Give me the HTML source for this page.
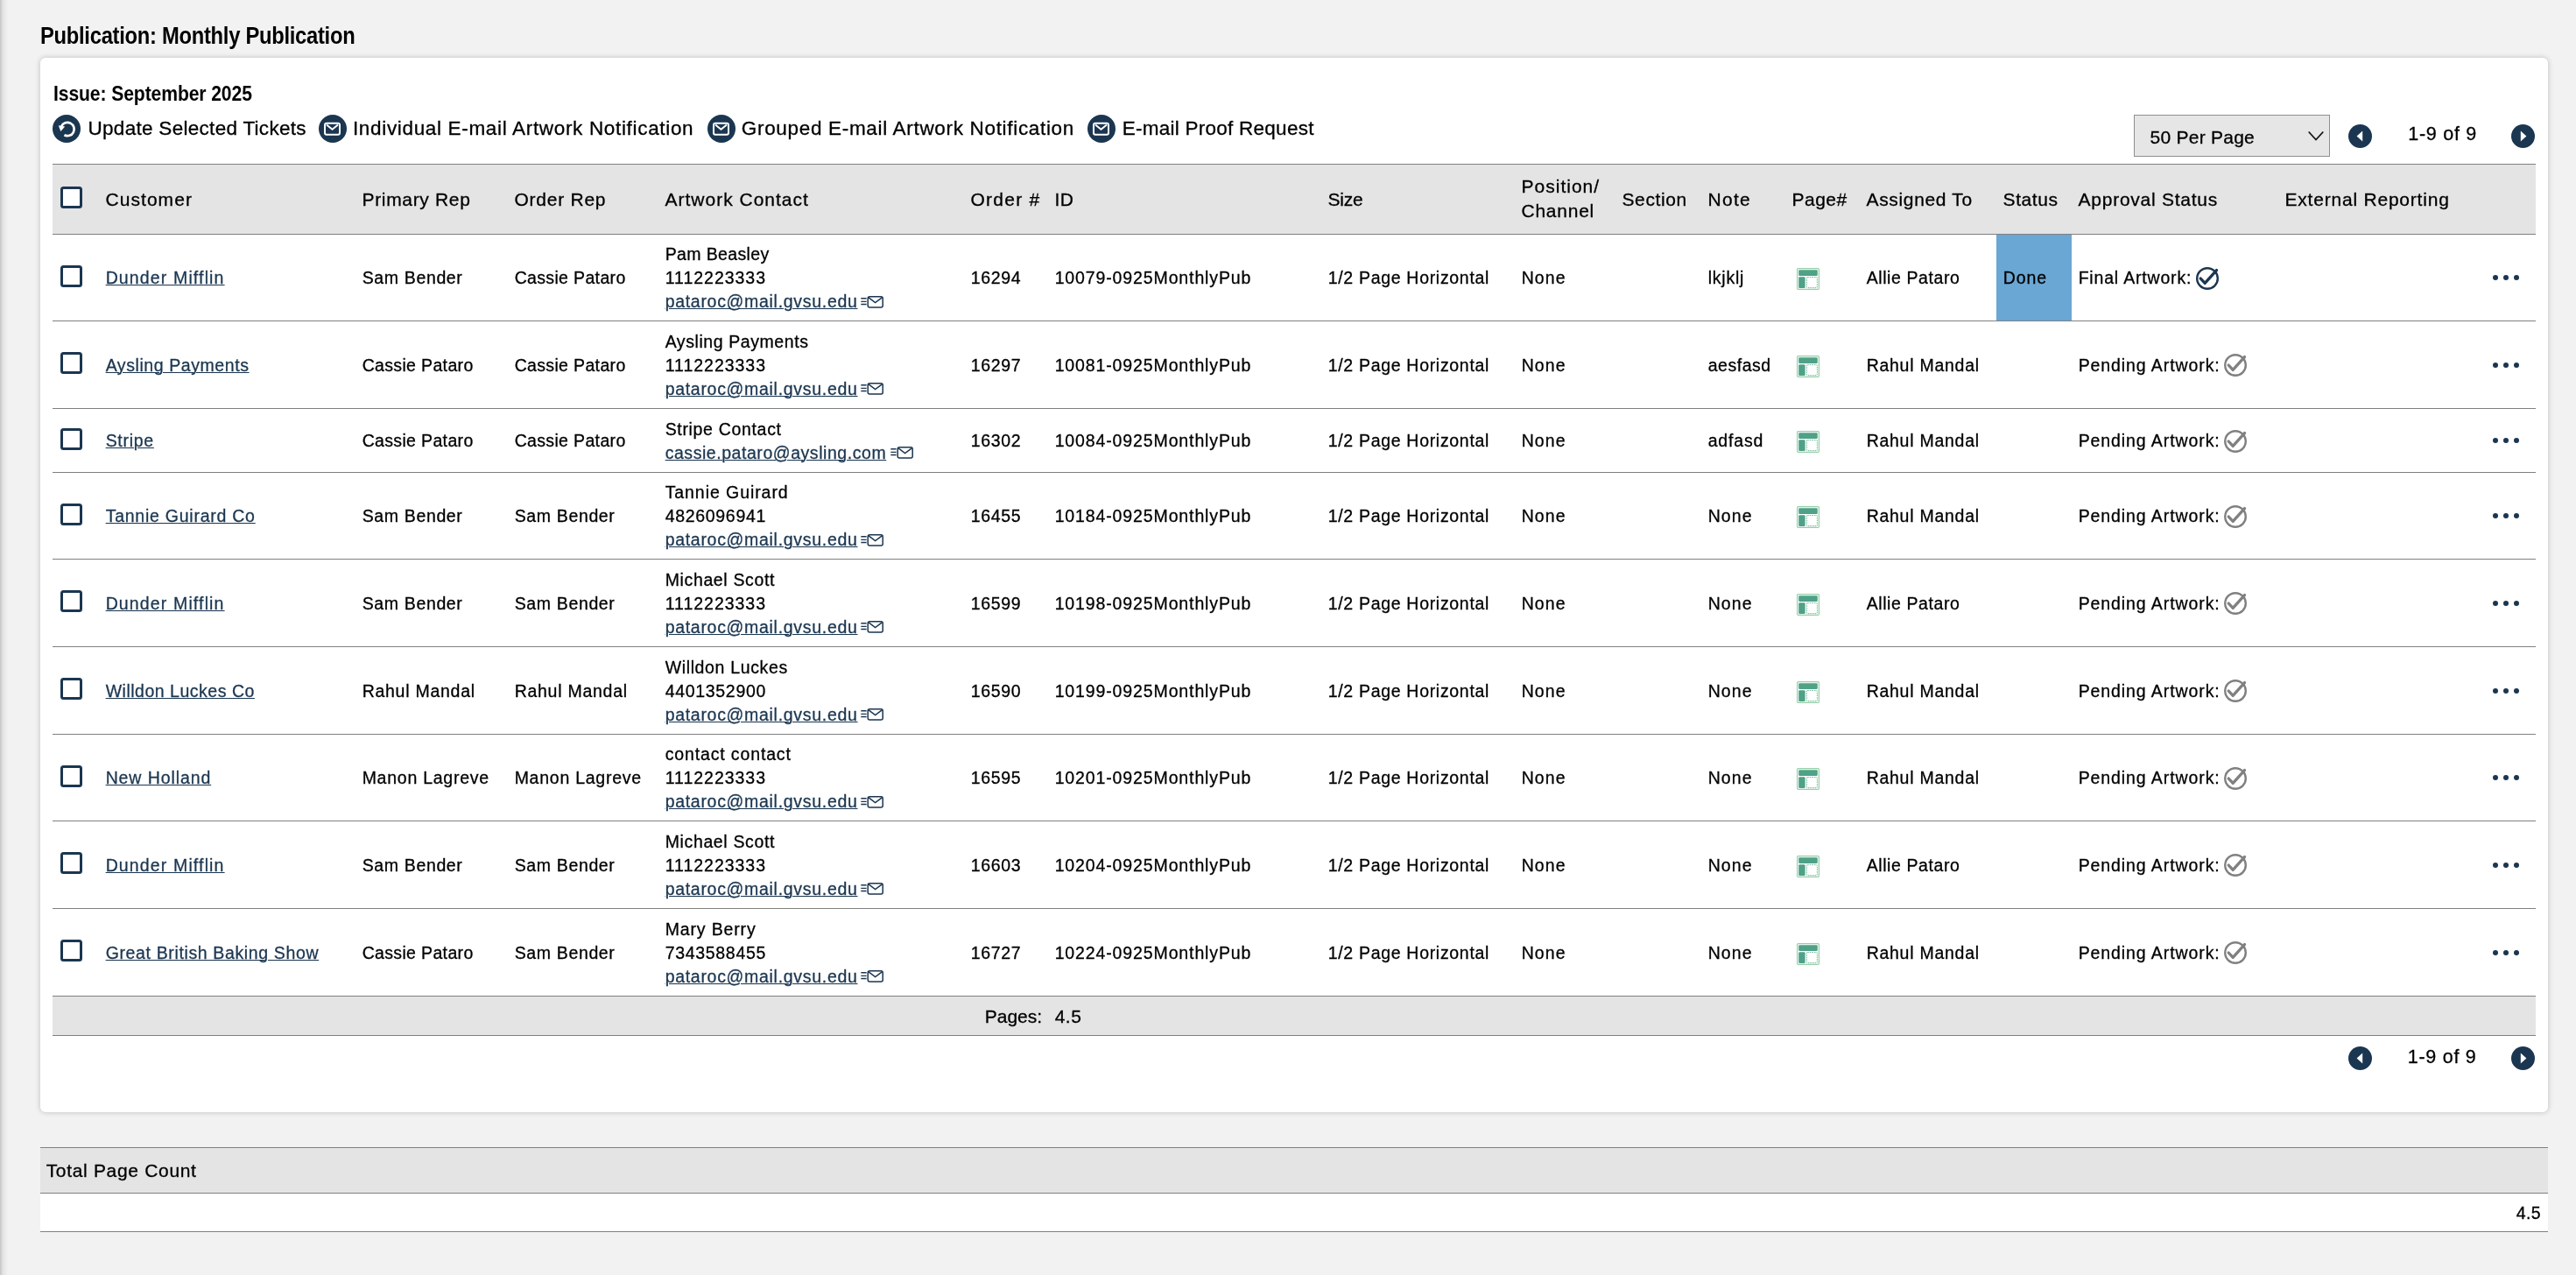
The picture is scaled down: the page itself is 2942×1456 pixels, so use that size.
<!DOCTYPE html>
<html><head><meta charset="utf-8"><title>Publication</title>
<style>
html,body{margin:0;padding:0}
body{width:2942px;height:1456px;overflow:hidden;background:#f2f2f2;position:relative;font-family:"Liberation Sans",sans-serif}
.a{position:absolute;display:block}
.t{position:absolute;white-space:pre;font-family:"Liberation Sans",sans-serif;-webkit-text-stroke:0.3px currentColor}
.cb{width:25px;height:25px;box-sizing:border-box;border:3px solid #1b3650;border-radius:3.5px;background:#fff}
</style></head><body>
<div class="a" style="left:0;top:0;width:10px;height:1456px;background:linear-gradient(to right,#c4c4c4,#e2e2e2 3px,#f2f2f2 9px)"></div>
<div class="a" style="left:46px;top:66px;width:2864px;height:1204px;background:#fff;border-radius:6px;box-shadow:0 0 6px rgba(0,0,0,0.22)"></div>
<div class="a" style="left:60px;top:188px;width:2836px;height:79px;background:#e4e4e4"></div>
<div class="a" style="left:60px;top:1138px;width:2836px;height:44px;background:#e4e4e4"></div>
<div class="a" style="left:2437px;top:131px;width:224px;height:48px;box-sizing:border-box;background:#e6e6e6;border:1px solid #8f8f8f"></div>
<svg class="a" style="left:2630px;top:145px" width="30" height="20" viewBox="0 0 30 20"><path d="M6.7 5.5 L15 14.6 L23.3 5.5" fill="none" stroke="#111" stroke-width="1.7"/></svg>
<div class="a" style="left:46px;top:1310px;width:2864px;height:1px;background:#808080"></div>
<div class="a" style="left:46px;top:1311px;width:2864px;height:51px;background:#e4e4e4"></div>
<div class="a" style="left:46px;top:1362px;width:2864px;height:1px;background:#808080"></div>
<div class="a" style="left:46px;top:1363px;width:2864px;height:43px;background:#fff"></div>
<div class="a" style="left:46px;top:1406px;width:2864px;height:1px;background:#808080"></div>
<div class="a" style="left:60px;top:187px;width:2836px;height:1px;background:#808080"></div><div class="a" style="left:60px;top:267px;width:2836px;height:1px;background:#808080"></div><div class="a" style="left:60px;top:366px;width:2836px;height:1px;background:#808080"></div><div class="a" style="left:60px;top:466px;width:2836px;height:1px;background:#808080"></div><div class="a" style="left:60px;top:539px;width:2836px;height:1px;background:#808080"></div><div class="a" style="left:60px;top:638px;width:2836px;height:1px;background:#808080"></div><div class="a" style="left:60px;top:738px;width:2836px;height:1px;background:#808080"></div><div class="a" style="left:60px;top:838px;width:2836px;height:1px;background:#808080"></div><div class="a" style="left:60px;top:937px;width:2836px;height:1px;background:#808080"></div><div class="a" style="left:60px;top:1037px;width:2836px;height:1px;background:#808080"></div><div class="a" style="left:60px;top:1137px;width:2836px;height:1px;background:#808080"></div><div class="a" style="left:60px;top:1182px;width:2836px;height:1px;background:#808080"></div>
<svg class="a" style="left:60.00px;top:131.00px" width="32" height="32" viewBox="0 0 32 32"><circle cx="16.0" cy="16.0" r="16.0" fill="#1b3650"/><path d="M10.1 13.3 A7.65 7.65 0 1 1 13.4 23.25" fill="none" stroke="#fff" stroke-width="2.7"/><path d="M6.8 12.2 L14.2 13.4 L9.3 19 Z" fill="#fff"/></svg><svg class="a" style="left:364.00px;top:131.00px" width="32" height="32" viewBox="0 0 32 32"><circle cx="16.0" cy="16.0" r="16.0" fill="#1b3650"/><rect x="7" y="9.8" width="17" height="13" rx="2" fill="none" stroke="#fff" stroke-width="2"/><path d="M9 11.5 L15.5 16.8 L22 11.5" fill="none" stroke="#fff" stroke-width="2"/></svg><svg class="a" style="left:808.00px;top:131.00px" width="32" height="32" viewBox="0 0 32 32"><circle cx="16.0" cy="16.0" r="16.0" fill="#1b3650"/><rect x="7" y="9.8" width="17" height="13" rx="2" fill="none" stroke="#fff" stroke-width="2"/><path d="M9 11.5 L15.5 16.8 L22 11.5" fill="none" stroke="#fff" stroke-width="2"/></svg><svg class="a" style="left:1242.00px;top:131.00px" width="32" height="32" viewBox="0 0 32 32"><circle cx="16.0" cy="16.0" r="16.0" fill="#1b3650"/><rect x="7" y="9.8" width="17" height="13" rx="2" fill="none" stroke="#fff" stroke-width="2"/><path d="M9 11.5 L15.5 16.8 L22 11.5" fill="none" stroke="#fff" stroke-width="2"/></svg><svg class="a" style="left:2681.90px;top:141.80px" width="27" height="27" viewBox="0 0 27 27"><circle cx="13.5" cy="13.5" r="13.5" fill="#1b3650"/><path d="M9.6 13.5 L16.2 7.6 L16.2 19.4 Z" fill="#fff"/></svg><svg class="a" style="left:2868.20px;top:141.80px" width="27" height="27" viewBox="0 0 27 27"><circle cx="13.5" cy="13.5" r="13.5" fill="#1b3650"/><path d="M17.4 13.5 L10.8 7.6 L10.8 19.4 Z" fill="#fff"/></svg><svg class="a" style="left:2681.90px;top:1195.00px" width="27" height="27" viewBox="0 0 27 27"><circle cx="13.5" cy="13.5" r="13.5" fill="#1b3650"/><path d="M9.6 13.5 L16.2 7.6 L16.2 19.4 Z" fill="#fff"/></svg><svg class="a" style="left:2868.20px;top:1195.00px" width="27" height="27" viewBox="0 0 27 27"><circle cx="13.5" cy="13.5" r="13.5" fill="#1b3650"/><path d="M17.4 13.5 L10.8 7.6 L10.8 19.4 Z" fill="#fff"/></svg><svg class="a" style="left:983.20px;top:337.80px" width="27" height="15" viewBox="0 0 27 15"><path d="M0.3 2.8 H6.6 M0.3 6.4 H6.6 M0.3 9.5 H6.6" stroke="#1b3650" stroke-width="1.4"/><rect x="8.2" y="0.8" width="17" height="12.2" rx="2" fill="none" stroke="#1b3650" stroke-width="1.5"/><path d="M8.8 1.6 L16.6 7.6 L24.6 1.6" fill="none" stroke="#1b3650" stroke-width="1.5"/></svg><svg class="a" style="left:2052px;top:306.00px" width="26" height="25" viewBox="0 0 26 25"><rect x="0.6" y="0.6" width="24.8" height="23.8" rx="1.2" fill="#fff" stroke="#94cfa6" stroke-width="1.2"/><rect x="2.2" y="2.2" width="21.6" height="6.8" rx="1.2" fill="#4fa187"/><rect x="2.2" y="10.2" width="7.4" height="12.8" rx="1.2" fill="#4fa187"/><rect x="11.4" y="10.6" width="12" height="12" rx="0.8" fill="#fff" stroke="#4fa187" stroke-width="0.8" stroke-dasharray="1.6 1"/></svg><div class="a" style="left:2280px;top:268px;width:86px;height:98px;background:#6aa7d5"></div><svg class="a" style="left:2507.00px;top:304.00px" width="28" height="28" viewBox="0 0 28 28"><circle cx="14" cy="14" r="11.8" fill="none" stroke="#1b3650" stroke-width="2.4"/><path d="M6.2 14 L11.2 19.4 L24.5 4.6" fill="none" stroke="#1b3650" stroke-width="3.3" stroke-linejoin="round" stroke-linecap="round"/></svg><div class="a" style="left:2847px;top:314.00px;width:6px;height:6px;border-radius:3px;background:#1b3650"></div><div class="a" style="left:2859px;top:314.00px;width:6px;height:6px;border-radius:3px;background:#1b3650"></div><div class="a" style="left:2871px;top:314.00px;width:6px;height:6px;border-radius:3px;background:#1b3650"></div><div class="a cb" style="left:69px;top:302.50px"></div><svg class="a" style="left:983.20px;top:437.30px" width="27" height="15" viewBox="0 0 27 15"><path d="M0.3 2.8 H6.6 M0.3 6.4 H6.6 M0.3 9.5 H6.6" stroke="#1b3650" stroke-width="1.4"/><rect x="8.2" y="0.8" width="17" height="12.2" rx="2" fill="none" stroke="#1b3650" stroke-width="1.5"/><path d="M8.8 1.6 L16.6 7.6 L24.6 1.6" fill="none" stroke="#1b3650" stroke-width="1.5"/></svg><svg class="a" style="left:2052px;top:405.50px" width="26" height="25" viewBox="0 0 26 25"><rect x="0.6" y="0.6" width="24.8" height="23.8" rx="1.2" fill="#fff" stroke="#94cfa6" stroke-width="1.2"/><rect x="2.2" y="2.2" width="21.6" height="6.8" rx="1.2" fill="#4fa187"/><rect x="2.2" y="10.2" width="7.4" height="12.8" rx="1.2" fill="#4fa187"/><rect x="11.4" y="10.6" width="12" height="12" rx="0.8" fill="#fff" stroke="#4fa187" stroke-width="0.8" stroke-dasharray="1.6 1"/></svg><svg class="a" style="left:2538.60px;top:403.00px" width="28" height="28" viewBox="0 0 28 28"><circle cx="14" cy="14" r="11.8" fill="none" stroke="#808080" stroke-width="2.4"/><path d="M6.2 14 L11.2 19.4 L24.5 4.6" fill="none" stroke="#808080" stroke-width="3.3" stroke-linejoin="round" stroke-linecap="round"/></svg><div class="a" style="left:2847px;top:413.50px;width:6px;height:6px;border-radius:3px;background:#1b3650"></div><div class="a" style="left:2859px;top:413.50px;width:6px;height:6px;border-radius:3px;background:#1b3650"></div><div class="a" style="left:2871px;top:413.50px;width:6px;height:6px;border-radius:3px;background:#1b3650"></div><div class="a cb" style="left:69px;top:402.00px"></div><svg class="a" style="left:1016.50px;top:510.30px" width="27" height="15" viewBox="0 0 27 15"><path d="M0.3 2.8 H6.6 M0.3 6.4 H6.6 M0.3 9.5 H6.6" stroke="#1b3650" stroke-width="1.4"/><rect x="8.2" y="0.8" width="17" height="12.2" rx="2" fill="none" stroke="#1b3650" stroke-width="1.5"/><path d="M8.8 1.6 L16.6 7.6 L24.6 1.6" fill="none" stroke="#1b3650" stroke-width="1.5"/></svg><svg class="a" style="left:2052px;top:492.00px" width="26" height="25" viewBox="0 0 26 25"><rect x="0.6" y="0.6" width="24.8" height="23.8" rx="1.2" fill="#fff" stroke="#94cfa6" stroke-width="1.2"/><rect x="2.2" y="2.2" width="21.6" height="6.8" rx="1.2" fill="#4fa187"/><rect x="2.2" y="10.2" width="7.4" height="12.8" rx="1.2" fill="#4fa187"/><rect x="11.4" y="10.6" width="12" height="12" rx="0.8" fill="#fff" stroke="#4fa187" stroke-width="0.8" stroke-dasharray="1.6 1"/></svg><svg class="a" style="left:2538.60px;top:489.50px" width="28" height="28" viewBox="0 0 28 28"><circle cx="14" cy="14" r="11.8" fill="none" stroke="#808080" stroke-width="2.4"/><path d="M6.2 14 L11.2 19.4 L24.5 4.6" fill="none" stroke="#808080" stroke-width="3.3" stroke-linejoin="round" stroke-linecap="round"/></svg><div class="a" style="left:2847px;top:500.00px;width:6px;height:6px;border-radius:3px;background:#1b3650"></div><div class="a" style="left:2859px;top:500.00px;width:6px;height:6px;border-radius:3px;background:#1b3650"></div><div class="a" style="left:2871px;top:500.00px;width:6px;height:6px;border-radius:3px;background:#1b3650"></div><div class="a cb" style="left:69px;top:488.50px"></div><svg class="a" style="left:983.20px;top:609.80px" width="27" height="15" viewBox="0 0 27 15"><path d="M0.3 2.8 H6.6 M0.3 6.4 H6.6 M0.3 9.5 H6.6" stroke="#1b3650" stroke-width="1.4"/><rect x="8.2" y="0.8" width="17" height="12.2" rx="2" fill="none" stroke="#1b3650" stroke-width="1.5"/><path d="M8.8 1.6 L16.6 7.6 L24.6 1.6" fill="none" stroke="#1b3650" stroke-width="1.5"/></svg><svg class="a" style="left:2052px;top:578.00px" width="26" height="25" viewBox="0 0 26 25"><rect x="0.6" y="0.6" width="24.8" height="23.8" rx="1.2" fill="#fff" stroke="#94cfa6" stroke-width="1.2"/><rect x="2.2" y="2.2" width="21.6" height="6.8" rx="1.2" fill="#4fa187"/><rect x="2.2" y="10.2" width="7.4" height="12.8" rx="1.2" fill="#4fa187"/><rect x="11.4" y="10.6" width="12" height="12" rx="0.8" fill="#fff" stroke="#4fa187" stroke-width="0.8" stroke-dasharray="1.6 1"/></svg><svg class="a" style="left:2538.60px;top:575.50px" width="28" height="28" viewBox="0 0 28 28"><circle cx="14" cy="14" r="11.8" fill="none" stroke="#808080" stroke-width="2.4"/><path d="M6.2 14 L11.2 19.4 L24.5 4.6" fill="none" stroke="#808080" stroke-width="3.3" stroke-linejoin="round" stroke-linecap="round"/></svg><div class="a" style="left:2847px;top:586.00px;width:6px;height:6px;border-radius:3px;background:#1b3650"></div><div class="a" style="left:2859px;top:586.00px;width:6px;height:6px;border-radius:3px;background:#1b3650"></div><div class="a" style="left:2871px;top:586.00px;width:6px;height:6px;border-radius:3px;background:#1b3650"></div><div class="a cb" style="left:69px;top:574.50px"></div><svg class="a" style="left:983.20px;top:709.30px" width="27" height="15" viewBox="0 0 27 15"><path d="M0.3 2.8 H6.6 M0.3 6.4 H6.6 M0.3 9.5 H6.6" stroke="#1b3650" stroke-width="1.4"/><rect x="8.2" y="0.8" width="17" height="12.2" rx="2" fill="none" stroke="#1b3650" stroke-width="1.5"/><path d="M8.8 1.6 L16.6 7.6 L24.6 1.6" fill="none" stroke="#1b3650" stroke-width="1.5"/></svg><svg class="a" style="left:2052px;top:677.50px" width="26" height="25" viewBox="0 0 26 25"><rect x="0.6" y="0.6" width="24.8" height="23.8" rx="1.2" fill="#fff" stroke="#94cfa6" stroke-width="1.2"/><rect x="2.2" y="2.2" width="21.6" height="6.8" rx="1.2" fill="#4fa187"/><rect x="2.2" y="10.2" width="7.4" height="12.8" rx="1.2" fill="#4fa187"/><rect x="11.4" y="10.6" width="12" height="12" rx="0.8" fill="#fff" stroke="#4fa187" stroke-width="0.8" stroke-dasharray="1.6 1"/></svg><svg class="a" style="left:2538.60px;top:675.00px" width="28" height="28" viewBox="0 0 28 28"><circle cx="14" cy="14" r="11.8" fill="none" stroke="#808080" stroke-width="2.4"/><path d="M6.2 14 L11.2 19.4 L24.5 4.6" fill="none" stroke="#808080" stroke-width="3.3" stroke-linejoin="round" stroke-linecap="round"/></svg><div class="a" style="left:2847px;top:685.50px;width:6px;height:6px;border-radius:3px;background:#1b3650"></div><div class="a" style="left:2859px;top:685.50px;width:6px;height:6px;border-radius:3px;background:#1b3650"></div><div class="a" style="left:2871px;top:685.50px;width:6px;height:6px;border-radius:3px;background:#1b3650"></div><div class="a cb" style="left:69px;top:674.00px"></div><svg class="a" style="left:983.20px;top:809.30px" width="27" height="15" viewBox="0 0 27 15"><path d="M0.3 2.8 H6.6 M0.3 6.4 H6.6 M0.3 9.5 H6.6" stroke="#1b3650" stroke-width="1.4"/><rect x="8.2" y="0.8" width="17" height="12.2" rx="2" fill="none" stroke="#1b3650" stroke-width="1.5"/><path d="M8.8 1.6 L16.6 7.6 L24.6 1.6" fill="none" stroke="#1b3650" stroke-width="1.5"/></svg><svg class="a" style="left:2052px;top:777.50px" width="26" height="25" viewBox="0 0 26 25"><rect x="0.6" y="0.6" width="24.8" height="23.8" rx="1.2" fill="#fff" stroke="#94cfa6" stroke-width="1.2"/><rect x="2.2" y="2.2" width="21.6" height="6.8" rx="1.2" fill="#4fa187"/><rect x="2.2" y="10.2" width="7.4" height="12.8" rx="1.2" fill="#4fa187"/><rect x="11.4" y="10.6" width="12" height="12" rx="0.8" fill="#fff" stroke="#4fa187" stroke-width="0.8" stroke-dasharray="1.6 1"/></svg><svg class="a" style="left:2538.60px;top:775.00px" width="28" height="28" viewBox="0 0 28 28"><circle cx="14" cy="14" r="11.8" fill="none" stroke="#808080" stroke-width="2.4"/><path d="M6.2 14 L11.2 19.4 L24.5 4.6" fill="none" stroke="#808080" stroke-width="3.3" stroke-linejoin="round" stroke-linecap="round"/></svg><div class="a" style="left:2847px;top:785.50px;width:6px;height:6px;border-radius:3px;background:#1b3650"></div><div class="a" style="left:2859px;top:785.50px;width:6px;height:6px;border-radius:3px;background:#1b3650"></div><div class="a" style="left:2871px;top:785.50px;width:6px;height:6px;border-radius:3px;background:#1b3650"></div><div class="a cb" style="left:69px;top:774.00px"></div><svg class="a" style="left:983.20px;top:908.80px" width="27" height="15" viewBox="0 0 27 15"><path d="M0.3 2.8 H6.6 M0.3 6.4 H6.6 M0.3 9.5 H6.6" stroke="#1b3650" stroke-width="1.4"/><rect x="8.2" y="0.8" width="17" height="12.2" rx="2" fill="none" stroke="#1b3650" stroke-width="1.5"/><path d="M8.8 1.6 L16.6 7.6 L24.6 1.6" fill="none" stroke="#1b3650" stroke-width="1.5"/></svg><svg class="a" style="left:2052px;top:877.00px" width="26" height="25" viewBox="0 0 26 25"><rect x="0.6" y="0.6" width="24.8" height="23.8" rx="1.2" fill="#fff" stroke="#94cfa6" stroke-width="1.2"/><rect x="2.2" y="2.2" width="21.6" height="6.8" rx="1.2" fill="#4fa187"/><rect x="2.2" y="10.2" width="7.4" height="12.8" rx="1.2" fill="#4fa187"/><rect x="11.4" y="10.6" width="12" height="12" rx="0.8" fill="#fff" stroke="#4fa187" stroke-width="0.8" stroke-dasharray="1.6 1"/></svg><svg class="a" style="left:2538.60px;top:874.50px" width="28" height="28" viewBox="0 0 28 28"><circle cx="14" cy="14" r="11.8" fill="none" stroke="#808080" stroke-width="2.4"/><path d="M6.2 14 L11.2 19.4 L24.5 4.6" fill="none" stroke="#808080" stroke-width="3.3" stroke-linejoin="round" stroke-linecap="round"/></svg><div class="a" style="left:2847px;top:885.00px;width:6px;height:6px;border-radius:3px;background:#1b3650"></div><div class="a" style="left:2859px;top:885.00px;width:6px;height:6px;border-radius:3px;background:#1b3650"></div><div class="a" style="left:2871px;top:885.00px;width:6px;height:6px;border-radius:3px;background:#1b3650"></div><div class="a cb" style="left:69px;top:873.50px"></div><svg class="a" style="left:983.20px;top:1008.30px" width="27" height="15" viewBox="0 0 27 15"><path d="M0.3 2.8 H6.6 M0.3 6.4 H6.6 M0.3 9.5 H6.6" stroke="#1b3650" stroke-width="1.4"/><rect x="8.2" y="0.8" width="17" height="12.2" rx="2" fill="none" stroke="#1b3650" stroke-width="1.5"/><path d="M8.8 1.6 L16.6 7.6 L24.6 1.6" fill="none" stroke="#1b3650" stroke-width="1.5"/></svg><svg class="a" style="left:2052px;top:976.50px" width="26" height="25" viewBox="0 0 26 25"><rect x="0.6" y="0.6" width="24.8" height="23.8" rx="1.2" fill="#fff" stroke="#94cfa6" stroke-width="1.2"/><rect x="2.2" y="2.2" width="21.6" height="6.8" rx="1.2" fill="#4fa187"/><rect x="2.2" y="10.2" width="7.4" height="12.8" rx="1.2" fill="#4fa187"/><rect x="11.4" y="10.6" width="12" height="12" rx="0.8" fill="#fff" stroke="#4fa187" stroke-width="0.8" stroke-dasharray="1.6 1"/></svg><svg class="a" style="left:2538.60px;top:974.00px" width="28" height="28" viewBox="0 0 28 28"><circle cx="14" cy="14" r="11.8" fill="none" stroke="#808080" stroke-width="2.4"/><path d="M6.2 14 L11.2 19.4 L24.5 4.6" fill="none" stroke="#808080" stroke-width="3.3" stroke-linejoin="round" stroke-linecap="round"/></svg><div class="a" style="left:2847px;top:984.50px;width:6px;height:6px;border-radius:3px;background:#1b3650"></div><div class="a" style="left:2859px;top:984.50px;width:6px;height:6px;border-radius:3px;background:#1b3650"></div><div class="a" style="left:2871px;top:984.50px;width:6px;height:6px;border-radius:3px;background:#1b3650"></div><div class="a cb" style="left:69px;top:973.00px"></div><svg class="a" style="left:983.20px;top:1108.30px" width="27" height="15" viewBox="0 0 27 15"><path d="M0.3 2.8 H6.6 M0.3 6.4 H6.6 M0.3 9.5 H6.6" stroke="#1b3650" stroke-width="1.4"/><rect x="8.2" y="0.8" width="17" height="12.2" rx="2" fill="none" stroke="#1b3650" stroke-width="1.5"/><path d="M8.8 1.6 L16.6 7.6 L24.6 1.6" fill="none" stroke="#1b3650" stroke-width="1.5"/></svg><svg class="a" style="left:2052px;top:1076.50px" width="26" height="25" viewBox="0 0 26 25"><rect x="0.6" y="0.6" width="24.8" height="23.8" rx="1.2" fill="#fff" stroke="#94cfa6" stroke-width="1.2"/><rect x="2.2" y="2.2" width="21.6" height="6.8" rx="1.2" fill="#4fa187"/><rect x="2.2" y="10.2" width="7.4" height="12.8" rx="1.2" fill="#4fa187"/><rect x="11.4" y="10.6" width="12" height="12" rx="0.8" fill="#fff" stroke="#4fa187" stroke-width="0.8" stroke-dasharray="1.6 1"/></svg><svg class="a" style="left:2538.60px;top:1074.00px" width="28" height="28" viewBox="0 0 28 28"><circle cx="14" cy="14" r="11.8" fill="none" stroke="#808080" stroke-width="2.4"/><path d="M6.2 14 L11.2 19.4 L24.5 4.6" fill="none" stroke="#808080" stroke-width="3.3" stroke-linejoin="round" stroke-linecap="round"/></svg><div class="a" style="left:2847px;top:1084.50px;width:6px;height:6px;border-radius:3px;background:#1b3650"></div><div class="a" style="left:2859px;top:1084.50px;width:6px;height:6px;border-radius:3px;background:#1b3650"></div><div class="a" style="left:2871px;top:1084.50px;width:6px;height:6px;border-radius:3px;background:#1b3650"></div><div class="a cb" style="left:69px;top:1073.00px"></div><div class="a cb" style="left:69px;top:213px"></div>
<div class="a" style="left:0;top:0;width:2942px;height:1456px;will-change:transform"><div class="t" style="left:45.81px;top:23.84px;font-size:27px;line-height:34px;letter-spacing:-0.315px;color:#000;font-weight:700;-webkit-text-stroke:0;transform:scaleX(0.88);transform-origin:0 0;">Publication: Monthly Publication</div><div class="t" style="left:60.92px;top:92.38px;font-size:24px;line-height:30px;letter-spacing:-0.115px;color:#000;font-weight:700;-webkit-text-stroke:0;transform:scaleX(0.88);transform-origin:0 0;">Issue: September 2025</div><div class="t" style="left:100.52px;top:133.00px;font-size:22.5px;line-height:28px;letter-spacing:0.291px;color:#000000;">Update Selected Tickets</div><div class="t" style="left:402.93px;top:133.00px;font-size:22.5px;line-height:28px;letter-spacing:0.670px;color:#000000;">Individual E-mail Artwork Notification</div><div class="t" style="left:846.82px;top:133.00px;font-size:22.5px;line-height:28px;letter-spacing:0.680px;color:#000000;">Grouped E-mail Artwork Notification</div><div class="t" style="left:1281.72px;top:133.00px;font-size:22.5px;line-height:28px;letter-spacing:0.256px;color:#000000;">E-mail Proof Request</div><div class="t" style="left:2455.53px;top:143.82px;font-size:21px;line-height:26px;letter-spacing:0.247px;color:#000000;">50 Per Page</div><div class="t" style="left:2750.19px;top:140.05px;font-size:21.5px;line-height:27px;letter-spacing:0.747px;color:#000000;">1-9 of 9</div><div class="t" style="left:2749.69px;top:1193.55px;font-size:21.5px;line-height:27px;letter-spacing:0.747px;color:#000000;">1-9 of 9</div><div class="t" style="left:120.53px;top:214.72px;font-size:21px;line-height:26px;letter-spacing:1.049px;color:#000000;">Customer</div><div class="t" style="left:413.53px;top:214.72px;font-size:21px;line-height:26px;letter-spacing:0.662px;color:#000000;">Primary Rep</div><div class="t" style="left:587.53px;top:214.72px;font-size:21px;line-height:26px;letter-spacing:0.744px;color:#000000;">Order Rep</div><div class="t" style="left:759.53px;top:214.72px;font-size:21px;line-height:26px;letter-spacing:0.995px;color:#000000;">Artwork Contact</div><div class="t" style="left:1108.53px;top:214.72px;font-size:21px;line-height:26px;letter-spacing:1.239px;color:#000000;">Order #</div><div class="t" style="left:1204.53px;top:214.72px;font-size:21px;line-height:26px;letter-spacing:0.424px;color:#000000;">ID</div><div class="t" style="left:1516.53px;top:214.72px;font-size:21px;line-height:26px;letter-spacing:-0.265px;color:#000000;">Size</div><div class="t" style="left:1852.53px;top:214.72px;font-size:21px;line-height:26px;letter-spacing:0.591px;color:#000000;">Section</div><div class="t" style="left:1950.53px;top:214.72px;font-size:21px;line-height:26px;letter-spacing:1.261px;color:#000000;">Note</div><div class="t" style="left:2046.53px;top:214.72px;font-size:21px;line-height:26px;letter-spacing:0.493px;color:#000000;">Page#</div><div class="t" style="left:2131.53px;top:214.72px;font-size:21px;line-height:26px;letter-spacing:0.658px;color:#000000;">Assigned To</div><div class="t" style="left:2287.53px;top:214.72px;font-size:21px;line-height:26px;letter-spacing:0.606px;color:#000000;">Status</div><div class="t" style="left:2373.53px;top:214.72px;font-size:21px;line-height:26px;letter-spacing:0.752px;color:#000000;">Approval Status</div><div class="t" style="left:2609.53px;top:214.72px;font-size:21px;line-height:26px;letter-spacing:0.786px;color:#000000;">External Reporting</div><div class="t" style="left:1737.53px;top:200.42px;font-size:21px;line-height:26px;letter-spacing:1.007px;color:#000000;">Position/</div><div class="t" style="left:1737.53px;top:227.92px;font-size:21px;line-height:26px;letter-spacing:0.747px;color:#000000;">Channel</div><div class="t" style="left:120.64px;top:305.24px;font-size:19.5px;line-height:24px;letter-spacing:1.143px;color:#1b3650;text-decoration:underline;text-decoration-thickness:1.3px;text-underline-offset:1px;">Dunder Mifflin</div><div class="t" style="left:413.63px;top:305.24px;font-size:19.5px;line-height:24px;letter-spacing:0.649px;color:#000000;">Sam Bender</div><div class="t" style="left:587.63px;top:305.24px;font-size:19.5px;line-height:24px;letter-spacing:0.347px;color:#000000;">Cassie Pataro</div><div class="t" style="left:759.63px;top:278.24px;font-size:19.5px;line-height:24px;letter-spacing:0.377px;color:#000000;">Pam Beasley</div><div class="t" style="left:759.63px;top:305.24px;font-size:19.5px;line-height:24px;letter-spacing:0.984px;color:#000000;">1112223333</div><div class="t" style="left:759.63px;top:332.24px;font-size:19.5px;line-height:24px;letter-spacing:0.703px;color:#1b3650;text-decoration:underline;text-decoration-thickness:1.3px;text-underline-offset:1px;">pataroc@mail.gvsu.edu</div><div class="t" style="left:1108.63px;top:305.24px;font-size:19.5px;line-height:24px;letter-spacing:0.693px;color:#000000;">16294</div><div class="t" style="left:1204.63px;top:305.24px;font-size:19.5px;line-height:24px;letter-spacing:0.880px;color:#000000;">10079-0925MonthlyPub</div><div class="t" style="left:1516.63px;top:305.24px;font-size:19.5px;line-height:24px;letter-spacing:0.694px;color:#000000;">1/2 Page Horizontal</div><div class="t" style="left:1737.63px;top:305.24px;font-size:19.5px;line-height:24px;letter-spacing:1.107px;color:#000000;">None</div><div class="t" style="left:1950.63px;top:305.24px;font-size:19.5px;line-height:24px;letter-spacing:0.792px;color:#000000;">lkjklj</div><div class="t" style="left:2131.64px;top:305.24px;font-size:19.5px;line-height:24px;letter-spacing:0.589px;color:#000000;">Allie Pataro</div><div class="t" style="left:2287.64px;top:305.24px;font-size:19.5px;line-height:24px;letter-spacing:0.970px;color:#000000;">Done</div><div class="t" style="left:2373.64px;top:305.24px;font-size:19.5px;line-height:24px;letter-spacing:0.819px;color:#000000;">Final Artwork:</div><div class="t" style="left:120.64px;top:404.74px;font-size:19.5px;line-height:24px;letter-spacing:0.581px;color:#1b3650;text-decoration:underline;text-decoration-thickness:1.3px;text-underline-offset:1px;">Aysling Payments</div><div class="t" style="left:413.63px;top:404.74px;font-size:19.5px;line-height:24px;letter-spacing:0.347px;color:#000000;">Cassie Pataro</div><div class="t" style="left:587.63px;top:404.74px;font-size:19.5px;line-height:24px;letter-spacing:0.347px;color:#000000;">Cassie Pataro</div><div class="t" style="left:759.63px;top:377.74px;font-size:19.5px;line-height:24px;letter-spacing:0.581px;color:#000000;">Aysling Payments</div><div class="t" style="left:759.63px;top:404.74px;font-size:19.5px;line-height:24px;letter-spacing:0.984px;color:#000000;">1112223333</div><div class="t" style="left:759.63px;top:431.74px;font-size:19.5px;line-height:24px;letter-spacing:0.703px;color:#1b3650;text-decoration:underline;text-decoration-thickness:1.3px;text-underline-offset:1px;">pataroc@mail.gvsu.edu</div><div class="t" style="left:1108.63px;top:404.74px;font-size:19.5px;line-height:24px;letter-spacing:0.693px;color:#000000;">16297</div><div class="t" style="left:1204.63px;top:404.74px;font-size:19.5px;line-height:24px;letter-spacing:0.880px;color:#000000;">10081-0925MonthlyPub</div><div class="t" style="left:1516.63px;top:404.74px;font-size:19.5px;line-height:24px;letter-spacing:0.694px;color:#000000;">1/2 Page Horizontal</div><div class="t" style="left:1737.63px;top:404.74px;font-size:19.5px;line-height:24px;letter-spacing:1.107px;color:#000000;">None</div><div class="t" style="left:1950.63px;top:404.74px;font-size:19.5px;line-height:24px;letter-spacing:0.547px;color:#000000;">aesfasd</div><div class="t" style="left:2131.64px;top:404.74px;font-size:19.5px;line-height:24px;letter-spacing:0.738px;color:#000000;">Rahul Mandal</div><div class="t" style="left:2373.64px;top:404.74px;font-size:19.5px;line-height:24px;letter-spacing:0.913px;color:#000000;">Pending Artwork:</div><div class="t" style="left:120.64px;top:491.24px;font-size:19.5px;line-height:24px;letter-spacing:0.723px;color:#1b3650;text-decoration:underline;text-decoration-thickness:1.3px;text-underline-offset:1px;">Stripe</div><div class="t" style="left:413.63px;top:491.24px;font-size:19.5px;line-height:24px;letter-spacing:0.347px;color:#000000;">Cassie Pataro</div><div class="t" style="left:587.63px;top:491.24px;font-size:19.5px;line-height:24px;letter-spacing:0.347px;color:#000000;">Cassie Pataro</div><div class="t" style="left:759.63px;top:477.74px;font-size:19.5px;line-height:24px;letter-spacing:0.676px;color:#000000;">Stripe Contact</div><div class="t" style="left:759.63px;top:504.74px;font-size:19.5px;line-height:24px;letter-spacing:0.554px;color:#1b3650;text-decoration:underline;text-decoration-thickness:1.3px;text-underline-offset:1px;">cassie.pataro@aysling.com</div><div class="t" style="left:1108.63px;top:491.24px;font-size:19.5px;line-height:24px;letter-spacing:0.693px;color:#000000;">16302</div><div class="t" style="left:1204.63px;top:491.24px;font-size:19.5px;line-height:24px;letter-spacing:0.880px;color:#000000;">10084-0925MonthlyPub</div><div class="t" style="left:1516.63px;top:491.24px;font-size:19.5px;line-height:24px;letter-spacing:0.694px;color:#000000;">1/2 Page Horizontal</div><div class="t" style="left:1737.63px;top:491.24px;font-size:19.5px;line-height:24px;letter-spacing:1.107px;color:#000000;">None</div><div class="t" style="left:1950.63px;top:491.24px;font-size:19.5px;line-height:24px;letter-spacing:0.829px;color:#000000;">adfasd</div><div class="t" style="left:2131.64px;top:491.24px;font-size:19.5px;line-height:24px;letter-spacing:0.738px;color:#000000;">Rahul Mandal</div><div class="t" style="left:2373.64px;top:491.24px;font-size:19.5px;line-height:24px;letter-spacing:0.913px;color:#000000;">Pending Artwork:</div><div class="t" style="left:120.64px;top:577.24px;font-size:19.5px;line-height:24px;letter-spacing:0.754px;color:#1b3650;text-decoration:underline;text-decoration-thickness:1.3px;text-underline-offset:1px;">Tannie Guirard Co</div><div class="t" style="left:413.63px;top:577.24px;font-size:19.5px;line-height:24px;letter-spacing:0.649px;color:#000000;">Sam Bender</div><div class="t" style="left:587.63px;top:577.24px;font-size:19.5px;line-height:24px;letter-spacing:0.649px;color:#000000;">Sam Bender</div><div class="t" style="left:759.63px;top:550.24px;font-size:19.5px;line-height:24px;letter-spacing:0.933px;color:#000000;">Tannie Guirard</div><div class="t" style="left:759.63px;top:577.24px;font-size:19.5px;line-height:24px;letter-spacing:0.695px;color:#000000;">4826096941</div><div class="t" style="left:759.63px;top:604.24px;font-size:19.5px;line-height:24px;letter-spacing:0.703px;color:#1b3650;text-decoration:underline;text-decoration-thickness:1.3px;text-underline-offset:1px;">pataroc@mail.gvsu.edu</div><div class="t" style="left:1108.63px;top:577.24px;font-size:19.5px;line-height:24px;letter-spacing:0.693px;color:#000000;">16455</div><div class="t" style="left:1204.63px;top:577.24px;font-size:19.5px;line-height:24px;letter-spacing:0.880px;color:#000000;">10184-0925MonthlyPub</div><div class="t" style="left:1516.63px;top:577.24px;font-size:19.5px;line-height:24px;letter-spacing:0.694px;color:#000000;">1/2 Page Horizontal</div><div class="t" style="left:1737.63px;top:577.24px;font-size:19.5px;line-height:24px;letter-spacing:1.107px;color:#000000;">None</div><div class="t" style="left:1950.63px;top:577.24px;font-size:19.5px;line-height:24px;letter-spacing:1.107px;color:#000000;">None</div><div class="t" style="left:2131.64px;top:577.24px;font-size:19.5px;line-height:24px;letter-spacing:0.738px;color:#000000;">Rahul Mandal</div><div class="t" style="left:2373.64px;top:577.24px;font-size:19.5px;line-height:24px;letter-spacing:0.913px;color:#000000;">Pending Artwork:</div><div class="t" style="left:120.64px;top:676.74px;font-size:19.5px;line-height:24px;letter-spacing:1.143px;color:#1b3650;text-decoration:underline;text-decoration-thickness:1.3px;text-underline-offset:1px;">Dunder Mifflin</div><div class="t" style="left:413.63px;top:676.74px;font-size:19.5px;line-height:24px;letter-spacing:0.649px;color:#000000;">Sam Bender</div><div class="t" style="left:587.63px;top:676.74px;font-size:19.5px;line-height:24px;letter-spacing:0.649px;color:#000000;">Sam Bender</div><div class="t" style="left:759.63px;top:649.74px;font-size:19.5px;line-height:24px;letter-spacing:0.645px;color:#000000;">Michael Scott</div><div class="t" style="left:759.63px;top:676.74px;font-size:19.5px;line-height:24px;letter-spacing:0.984px;color:#000000;">1112223333</div><div class="t" style="left:759.63px;top:703.74px;font-size:19.5px;line-height:24px;letter-spacing:0.703px;color:#1b3650;text-decoration:underline;text-decoration-thickness:1.3px;text-underline-offset:1px;">pataroc@mail.gvsu.edu</div><div class="t" style="left:1108.63px;top:676.74px;font-size:19.5px;line-height:24px;letter-spacing:0.693px;color:#000000;">16599</div><div class="t" style="left:1204.63px;top:676.74px;font-size:19.5px;line-height:24px;letter-spacing:0.880px;color:#000000;">10198-0925MonthlyPub</div><div class="t" style="left:1516.63px;top:676.74px;font-size:19.5px;line-height:24px;letter-spacing:0.694px;color:#000000;">1/2 Page Horizontal</div><div class="t" style="left:1737.63px;top:676.74px;font-size:19.5px;line-height:24px;letter-spacing:1.107px;color:#000000;">None</div><div class="t" style="left:1950.63px;top:676.74px;font-size:19.5px;line-height:24px;letter-spacing:1.107px;color:#000000;">None</div><div class="t" style="left:2131.64px;top:676.74px;font-size:19.5px;line-height:24px;letter-spacing:0.589px;color:#000000;">Allie Pataro</div><div class="t" style="left:2373.64px;top:676.74px;font-size:19.5px;line-height:24px;letter-spacing:0.913px;color:#000000;">Pending Artwork:</div><div class="t" style="left:120.64px;top:776.74px;font-size:19.5px;line-height:24px;letter-spacing:0.517px;color:#1b3650;text-decoration:underline;text-decoration-thickness:1.3px;text-underline-offset:1px;">Willdon Luckes Co</div><div class="t" style="left:413.63px;top:776.74px;font-size:19.5px;line-height:24px;letter-spacing:0.738px;color:#000000;">Rahul Mandal</div><div class="t" style="left:587.63px;top:776.74px;font-size:19.5px;line-height:24px;letter-spacing:0.738px;color:#000000;">Rahul Mandal</div><div class="t" style="left:759.63px;top:749.74px;font-size:19.5px;line-height:24px;letter-spacing:0.646px;color:#000000;">Willdon Luckes</div><div class="t" style="left:759.63px;top:776.74px;font-size:19.5px;line-height:24px;letter-spacing:0.695px;color:#000000;">4401352900</div><div class="t" style="left:759.63px;top:803.74px;font-size:19.5px;line-height:24px;letter-spacing:0.703px;color:#1b3650;text-decoration:underline;text-decoration-thickness:1.3px;text-underline-offset:1px;">pataroc@mail.gvsu.edu</div><div class="t" style="left:1108.63px;top:776.74px;font-size:19.5px;line-height:24px;letter-spacing:0.693px;color:#000000;">16590</div><div class="t" style="left:1204.63px;top:776.74px;font-size:19.5px;line-height:24px;letter-spacing:0.880px;color:#000000;">10199-0925MonthlyPub</div><div class="t" style="left:1516.63px;top:776.74px;font-size:19.5px;line-height:24px;letter-spacing:0.694px;color:#000000;">1/2 Page Horizontal</div><div class="t" style="left:1737.63px;top:776.74px;font-size:19.5px;line-height:24px;letter-spacing:1.107px;color:#000000;">None</div><div class="t" style="left:1950.63px;top:776.74px;font-size:19.5px;line-height:24px;letter-spacing:1.107px;color:#000000;">None</div><div class="t" style="left:2131.64px;top:776.74px;font-size:19.5px;line-height:24px;letter-spacing:0.738px;color:#000000;">Rahul Mandal</div><div class="t" style="left:2373.64px;top:776.74px;font-size:19.5px;line-height:24px;letter-spacing:0.913px;color:#000000;">Pending Artwork:</div><div class="t" style="left:120.64px;top:876.24px;font-size:19.5px;line-height:24px;letter-spacing:0.910px;color:#1b3650;text-decoration:underline;text-decoration-thickness:1.3px;text-underline-offset:1px;">New Holland</div><div class="t" style="left:413.63px;top:876.24px;font-size:19.5px;line-height:24px;letter-spacing:0.747px;color:#000000;">Manon Lagreve</div><div class="t" style="left:587.63px;top:876.24px;font-size:19.5px;line-height:24px;letter-spacing:0.747px;color:#000000;">Manon Lagreve</div><div class="t" style="left:759.63px;top:849.24px;font-size:19.5px;line-height:24px;letter-spacing:0.866px;color:#000000;">contact contact</div><div class="t" style="left:759.63px;top:876.24px;font-size:19.5px;line-height:24px;letter-spacing:0.984px;color:#000000;">1112223333</div><div class="t" style="left:759.63px;top:903.24px;font-size:19.5px;line-height:24px;letter-spacing:0.703px;color:#1b3650;text-decoration:underline;text-decoration-thickness:1.3px;text-underline-offset:1px;">pataroc@mail.gvsu.edu</div><div class="t" style="left:1108.63px;top:876.24px;font-size:19.5px;line-height:24px;letter-spacing:0.693px;color:#000000;">16595</div><div class="t" style="left:1204.63px;top:876.24px;font-size:19.5px;line-height:24px;letter-spacing:0.880px;color:#000000;">10201-0925MonthlyPub</div><div class="t" style="left:1516.63px;top:876.24px;font-size:19.5px;line-height:24px;letter-spacing:0.694px;color:#000000;">1/2 Page Horizontal</div><div class="t" style="left:1737.63px;top:876.24px;font-size:19.5px;line-height:24px;letter-spacing:1.107px;color:#000000;">None</div><div class="t" style="left:1950.63px;top:876.24px;font-size:19.5px;line-height:24px;letter-spacing:1.107px;color:#000000;">None</div><div class="t" style="left:2131.64px;top:876.24px;font-size:19.5px;line-height:24px;letter-spacing:0.738px;color:#000000;">Rahul Mandal</div><div class="t" style="left:2373.64px;top:876.24px;font-size:19.5px;line-height:24px;letter-spacing:0.913px;color:#000000;">Pending Artwork:</div><div class="t" style="left:120.64px;top:975.74px;font-size:19.5px;line-height:24px;letter-spacing:1.143px;color:#1b3650;text-decoration:underline;text-decoration-thickness:1.3px;text-underline-offset:1px;">Dunder Mifflin</div><div class="t" style="left:413.63px;top:975.74px;font-size:19.5px;line-height:24px;letter-spacing:0.649px;color:#000000;">Sam Bender</div><div class="t" style="left:587.63px;top:975.74px;font-size:19.5px;line-height:24px;letter-spacing:0.649px;color:#000000;">Sam Bender</div><div class="t" style="left:759.63px;top:948.74px;font-size:19.5px;line-height:24px;letter-spacing:0.645px;color:#000000;">Michael Scott</div><div class="t" style="left:759.63px;top:975.74px;font-size:19.5px;line-height:24px;letter-spacing:0.984px;color:#000000;">1112223333</div><div class="t" style="left:759.63px;top:1002.74px;font-size:19.5px;line-height:24px;letter-spacing:0.703px;color:#1b3650;text-decoration:underline;text-decoration-thickness:1.3px;text-underline-offset:1px;">pataroc@mail.gvsu.edu</div><div class="t" style="left:1108.63px;top:975.74px;font-size:19.5px;line-height:24px;letter-spacing:0.693px;color:#000000;">16603</div><div class="t" style="left:1204.63px;top:975.74px;font-size:19.5px;line-height:24px;letter-spacing:0.880px;color:#000000;">10204-0925MonthlyPub</div><div class="t" style="left:1516.63px;top:975.74px;font-size:19.5px;line-height:24px;letter-spacing:0.694px;color:#000000;">1/2 Page Horizontal</div><div class="t" style="left:1737.63px;top:975.74px;font-size:19.5px;line-height:24px;letter-spacing:1.107px;color:#000000;">None</div><div class="t" style="left:1950.63px;top:975.74px;font-size:19.5px;line-height:24px;letter-spacing:1.107px;color:#000000;">None</div><div class="t" style="left:2131.64px;top:975.74px;font-size:19.5px;line-height:24px;letter-spacing:0.589px;color:#000000;">Allie Pataro</div><div class="t" style="left:2373.64px;top:975.74px;font-size:19.5px;line-height:24px;letter-spacing:0.913px;color:#000000;">Pending Artwork:</div><div class="t" style="left:120.64px;top:1075.74px;font-size:19.5px;line-height:24px;letter-spacing:0.639px;color:#1b3650;text-decoration:underline;text-decoration-thickness:1.3px;text-underline-offset:1px;">Great British Baking Show</div><div class="t" style="left:413.63px;top:1075.74px;font-size:19.5px;line-height:24px;letter-spacing:0.347px;color:#000000;">Cassie Pataro</div><div class="t" style="left:587.63px;top:1075.74px;font-size:19.5px;line-height:24px;letter-spacing:0.649px;color:#000000;">Sam Bender</div><div class="t" style="left:759.63px;top:1048.74px;font-size:19.5px;line-height:24px;letter-spacing:0.861px;color:#000000;">Mary Berry</div><div class="t" style="left:759.63px;top:1075.74px;font-size:19.5px;line-height:24px;letter-spacing:0.695px;color:#000000;">7343588455</div><div class="t" style="left:759.63px;top:1102.74px;font-size:19.5px;line-height:24px;letter-spacing:0.703px;color:#1b3650;text-decoration:underline;text-decoration-thickness:1.3px;text-underline-offset:1px;">pataroc@mail.gvsu.edu</div><div class="t" style="left:1108.63px;top:1075.74px;font-size:19.5px;line-height:24px;letter-spacing:0.693px;color:#000000;">16727</div><div class="t" style="left:1204.63px;top:1075.74px;font-size:19.5px;line-height:24px;letter-spacing:0.880px;color:#000000;">10224-0925MonthlyPub</div><div class="t" style="left:1516.63px;top:1075.74px;font-size:19.5px;line-height:24px;letter-spacing:0.694px;color:#000000;">1/2 Page Horizontal</div><div class="t" style="left:1737.63px;top:1075.74px;font-size:19.5px;line-height:24px;letter-spacing:1.107px;color:#000000;">None</div><div class="t" style="left:1950.63px;top:1075.74px;font-size:19.5px;line-height:24px;letter-spacing:1.107px;color:#000000;">None</div><div class="t" style="left:2131.64px;top:1075.74px;font-size:19.5px;line-height:24px;letter-spacing:0.738px;color:#000000;">Rahul Mandal</div><div class="t" style="left:2373.64px;top:1075.74px;font-size:19.5px;line-height:24px;letter-spacing:0.913px;color:#000000;">Pending Artwork:</div><div class="t" style="left:1124.83px;top:1147.72px;font-size:21px;line-height:26px;letter-spacing:-0.026px;color:#000000;">Pages:</div><div class="t" style="left:1204.73px;top:1147.72px;font-size:21px;line-height:26px;letter-spacing:0.454px;color:#000000;">4.5</div><div class="t" style="left:52.63px;top:1323.52px;font-size:21px;line-height:26px;letter-spacing:0.680px;color:#000000;">Total Page Count</div><div class="t" style="right:39.94px;top:1372.94px;font-size:19.5px;line-height:24px;letter-spacing:0.424px;color:#000000;">4.5</div></div>
</body></html>
